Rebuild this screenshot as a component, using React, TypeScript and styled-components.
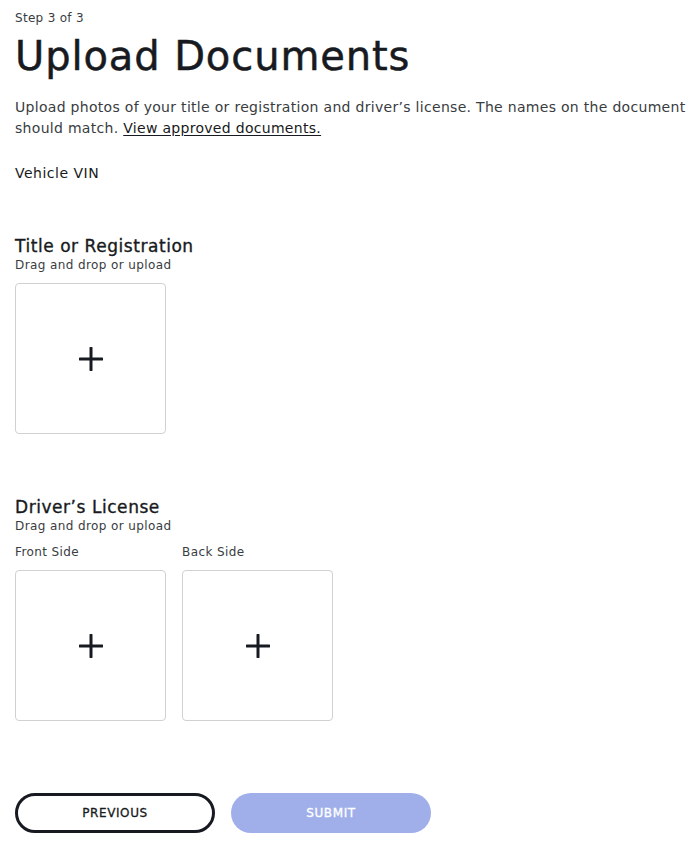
import React from "react";
import styled, { createGlobalStyle } from "styled-components";

const Global = createGlobalStyle`
  html, body { margin: 0; padding: 0; background: #fff; }
  body { font-family: "DejaVu Sans", "Open Sans", sans-serif; color: #171a20; }
  * { box-sizing: border-box; }
`;

const Page = styled.div`
  padding: 9px 0 16px 15px;
  display: flex;
  flex-direction: column;
`;

const Step = styled.div`
  font-size: 12px;
  line-height: 18px;
  color: #393c41;
  letter-spacing: 0.3px;
`;

const Title = styled.h1`
  margin: 5px 0 0 0;
  font-size: 40px;
  line-height: 48px;
  font-weight: 400;
  color: #171a20;
  letter-spacing: 0.9px;
  -webkit-text-stroke: 0.5px #171a20;
`;

const Intro = styled.p`
  margin: 17px 0 0 0;
  font-size: 14px;
  line-height: 21px;
  color: #393c41;
  letter-spacing: 0.3px;
`;

const Link = styled.a`
  color: #171a20;
  text-decoration: underline;
  text-underline-offset: 2px;
`;

const Field = styled.div`
  margin-top: 24px;
  font-size: 14px;
  line-height: 20px;
  color: #171a20;
  letter-spacing: 0.5px;
`;

const Section = styled.section<{ $top: number }>`
  margin-top: ${(p) => p.$top}px;
  display: flex;
  flex-direction: column;
`;

const SectionTitle = styled.h2`
  margin: 0;
  font-size: 17px;
  line-height: 22px;
  font-weight: 400;
  color: #171a20;
  letter-spacing: 0.55px;
  -webkit-text-stroke: 0.35px #171a20;
`;

const Hint = styled.div`
  font-size: 12px;
  line-height: 16px;
  color: #393c41;
  letter-spacing: 0.4px;
`;

const Slots = styled.div`
  margin-top: 10px;
  display: flex;
  gap: 16px;
`;

const Slot = styled.div`
  display: flex;
  flex-direction: column;
`;

const SlotLabel = styled.div`
  font-size: 12px;
  line-height: 16px;
  color: #393c41;
  margin-bottom: 10px;
  letter-spacing: 0.4px;
`;

const Drop = styled.button`
  width: 151px;
  height: 151px;
  border: 1px solid #d0d1d2;
  border-radius: 4px;
  background: #fff;
  display: flex;
  align-items: center;
  justify-content: center;
  padding: 0;
  cursor: pointer;
`;

const Buttons = styled.div`
  margin-top: 72px;
  display: flex;
  gap: 16px;
`;

const Btn = styled.button<{ $primary?: boolean }>`
  width: 200px;
  height: 40px;
  border-radius: 20px;
  font-family: inherit;
  font-size: 12px;
  font-weight: 400;
  letter-spacing: 0.6px;
  text-transform: uppercase;
  cursor: pointer;
  border: ${(p) => (p.$primary ? "none" : "3px solid #171a20")};
  background: ${(p) => (p.$primary ? "#a0afea" : "#fff")};
  color: ${(p) => (p.$primary ? "#fff" : "#171a20")};
  -webkit-text-stroke: 0.3px ${(p) => (p.$primary ? "#fff" : "#171a20")};
`;

const Plus = () => (
  <svg width="24" height="24" viewBox="0 0 24 24" fill="none">
    <path d="M12 1v22M1 12h22" stroke="#171a20" strokeWidth="3" strokeLinecap="round" />
  </svg>
);

export default function App() {
  return (
    <>
      <Global />
      <Page>
        <Step>Step 3 of 3</Step>
        <Title>Upload Documents</Title>
        <Intro>
          Upload photos of your title or registration and driver’s license. The names on the document should match.{" "}
          <Link href="#">View approved documents.</Link>
        </Intro>
        <Field>Vehicle VIN</Field>
        <Section $top={52}>
          <SectionTitle>Title or Registration</SectionTitle>
          <Hint>Drag and drop or upload</Hint>
          <Slots>
            <Drop aria-label="Upload title or registration">
              <Plus />
            </Drop>
          </Slots>
        </Section>
        <Section $top={62}>
          <SectionTitle>Driver’s License</SectionTitle>
          <Hint>Drag and drop or upload</Hint>
          <Slots>
            <Slot>
              <SlotLabel>Front Side</SlotLabel>
              <Drop aria-label="Upload front side">
                <Plus />
              </Drop>
            </Slot>
            <Slot>
              <SlotLabel>Back Side</SlotLabel>
              <Drop aria-label="Upload back side">
                <Plus />
              </Drop>
            </Slot>
          </Slots>
        </Section>
        <Buttons>
          <Btn>Previous</Btn>
          <Btn $primary>Submit</Btn>
        </Buttons>
      </Page>
    </>
  );
}
